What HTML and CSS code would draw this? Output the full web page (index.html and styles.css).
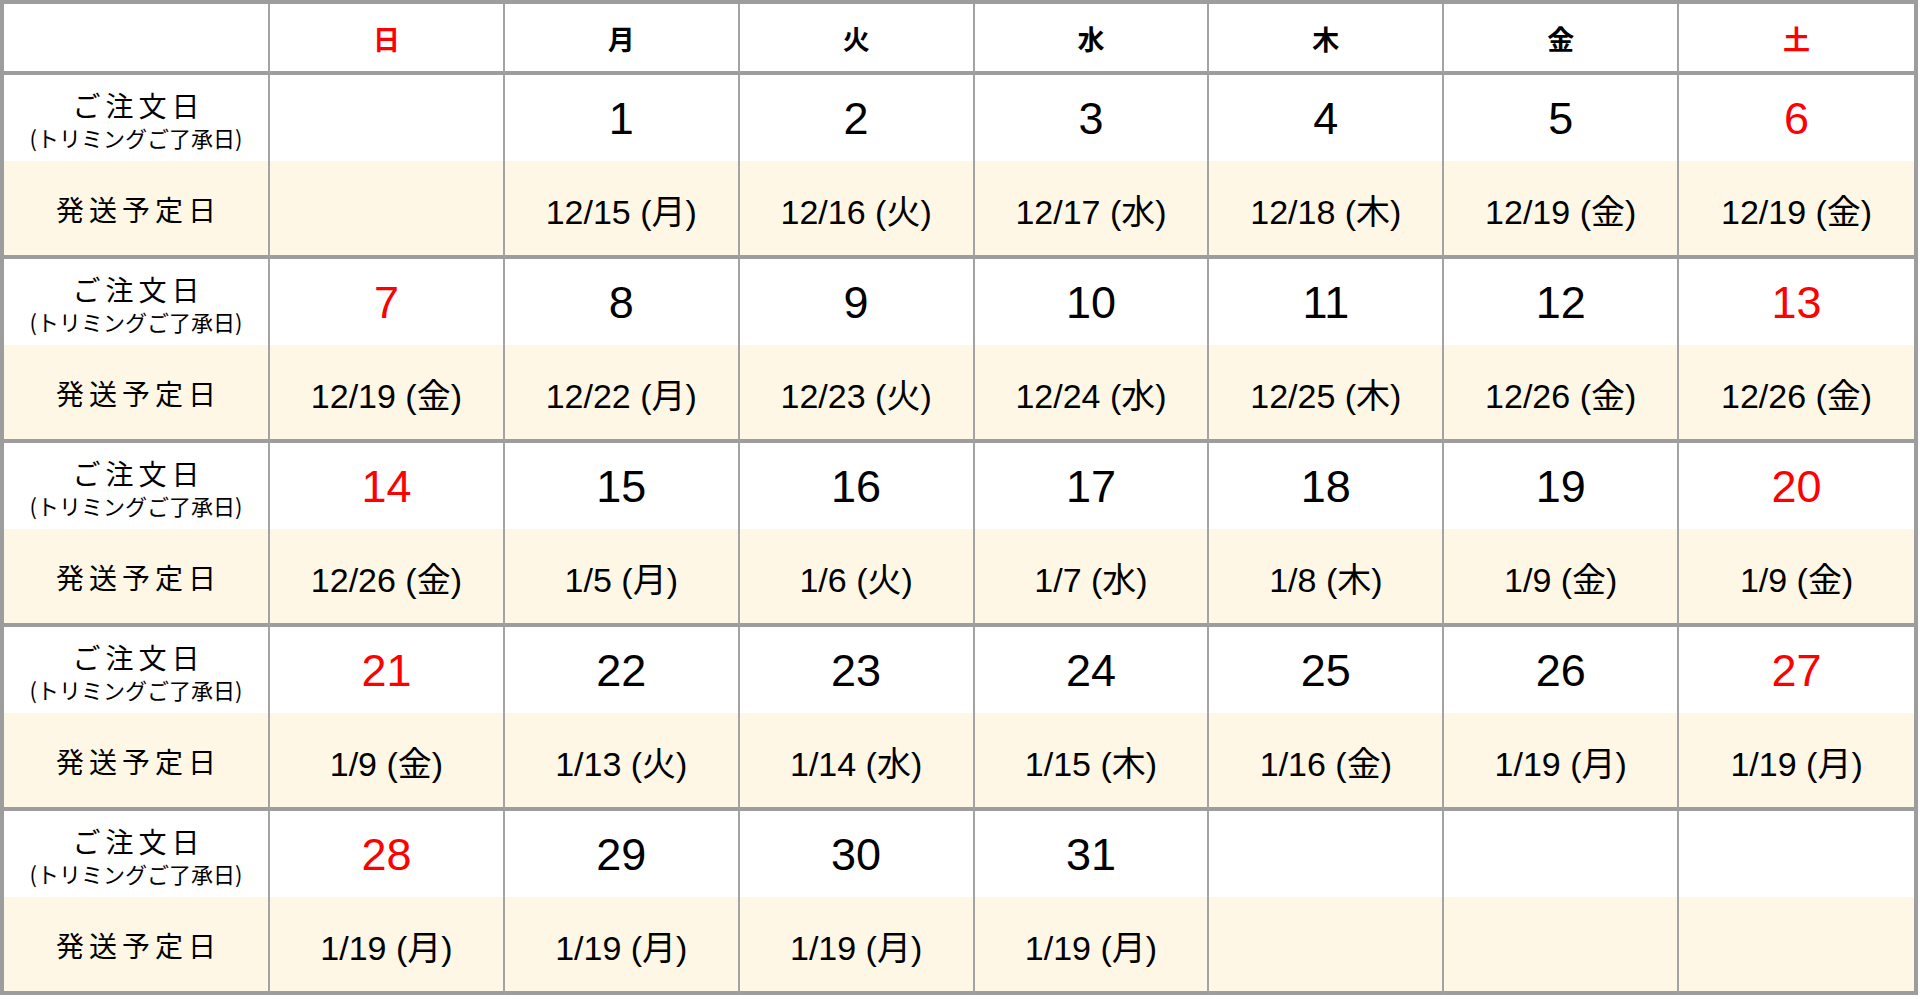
FILE: index.html
```html
<!DOCTYPE html>
<html lang="ja">
<head>
<meta charset="utf-8">
<title>発送予定カレンダー</title>
<link rel="stylesheet" href="styles.css">
</head>
<body>
<div class="cal">
  <div class="cell head"></div>
  <div class="cell head red">日</div>
  <div class="cell head">月</div>
  <div class="cell head">火</div>
  <div class="cell head">水</div>
  <div class="cell head">木</div>
  <div class="cell head">金</div>
  <div class="cell head red last">土</div>

  <div class="cell order label"><span class="l1">ご注文日</span><span class="l2">(トリミングご了承日)</span></div>
  <div class="cell order"></div>
  <div class="cell order num">1</div>
  <div class="cell order num">2</div>
  <div class="cell order num">3</div>
  <div class="cell order num">4</div>
  <div class="cell order num">5</div>
  <div class="cell order num red last">6</div>
  <div class="cell ship label"><span class="l3">発送予定日</span></div>
  <div class="cell ship"></div>
  <div class="cell ship">12/15 (月)</div>
  <div class="cell ship">12/16 (火)</div>
  <div class="cell ship">12/17 (水)</div>
  <div class="cell ship">12/18 (木)</div>
  <div class="cell ship">12/19 (金)</div>
  <div class="cell ship last">12/19 (金)</div>

  <div class="cell order label"><span class="l1">ご注文日</span><span class="l2">(トリミングご了承日)</span></div>
  <div class="cell order num red">7</div>
  <div class="cell order num">8</div>
  <div class="cell order num">9</div>
  <div class="cell order num">10</div>
  <div class="cell order num">11</div>
  <div class="cell order num">12</div>
  <div class="cell order num red last">13</div>
  <div class="cell ship label"><span class="l3">発送予定日</span></div>
  <div class="cell ship">12/19 (金)</div>
  <div class="cell ship">12/22 (月)</div>
  <div class="cell ship">12/23 (火)</div>
  <div class="cell ship">12/24 (水)</div>
  <div class="cell ship">12/25 (木)</div>
  <div class="cell ship">12/26 (金)</div>
  <div class="cell ship last">12/26 (金)</div>

  <div class="cell order label"><span class="l1">ご注文日</span><span class="l2">(トリミングご了承日)</span></div>
  <div class="cell order num red">14</div>
  <div class="cell order num">15</div>
  <div class="cell order num">16</div>
  <div class="cell order num">17</div>
  <div class="cell order num">18</div>
  <div class="cell order num">19</div>
  <div class="cell order num red last">20</div>
  <div class="cell ship label"><span class="l3">発送予定日</span></div>
  <div class="cell ship">12/26 (金)</div>
  <div class="cell ship">1/5 (月)</div>
  <div class="cell ship">1/6 (火)</div>
  <div class="cell ship">1/7 (水)</div>
  <div class="cell ship">1/8 (木)</div>
  <div class="cell ship">1/9 (金)</div>
  <div class="cell ship last">1/9 (金)</div>

  <div class="cell order label"><span class="l1">ご注文日</span><span class="l2">(トリミングご了承日)</span></div>
  <div class="cell order num red">21</div>
  <div class="cell order num">22</div>
  <div class="cell order num">23</div>
  <div class="cell order num">24</div>
  <div class="cell order num">25</div>
  <div class="cell order num">26</div>
  <div class="cell order num red last">27</div>
  <div class="cell ship label"><span class="l3">発送予定日</span></div>
  <div class="cell ship">1/9 (金)</div>
  <div class="cell ship">1/13 (火)</div>
  <div class="cell ship">1/14 (水)</div>
  <div class="cell ship">1/15 (木)</div>
  <div class="cell ship">1/16 (金)</div>
  <div class="cell ship">1/19 (月)</div>
  <div class="cell ship last">1/19 (月)</div>

  <div class="cell order label"><span class="l1">ご注文日</span><span class="l2">(トリミングご了承日)</span></div>
  <div class="cell order num red">28</div>
  <div class="cell order num">29</div>
  <div class="cell order num">30</div>
  <div class="cell order num">31</div>
  <div class="cell order"></div>
  <div class="cell order"></div>
  <div class="cell order last"></div>
  <div class="cell ship label"><span class="l3">発送予定日</span></div>
  <div class="cell ship">1/19 (月)</div>
  <div class="cell ship">1/19 (月)</div>
  <div class="cell ship">1/19 (月)</div>
  <div class="cell ship">1/19 (月)</div>
  <div class="cell ship"></div>
  <div class="cell ship"></div>
  <div class="cell ship last"></div>
</div>
</body>
</html>
```

FILE: styles.css
```css
* { box-sizing: border-box; }
html, body {
  margin: 0;
  padding: 0;
  background: #ffffff;
}
body {
  font-family: "Liberation Sans", "Noto Sans CJK JP", sans-serif;
  color: #000000;
}
.cal {
  width: 1918px;
  display: grid;
  grid-template-columns: 266px repeat(7, 1fr);
  grid-auto-rows: auto;
  border-top: 4px solid #9d9d9d;
  border-left: 4px solid #9d9d9d;
  border-right: 4px solid #9d9d9d;
}
.cell {
  display: flex;
  flex-direction: column;
  align-items: center;
  justify-content: center;
  border-right: 2px solid #a3a3a3;
  text-align: center;
  white-space: nowrap;
}
.cell.last { border-right: none; }
.head {
  height: 71px;
  border-bottom: 4px solid #9d9d9d;
  font-weight: bold;
  font-size: 27px;
  font-family: "Noto Sans CJK JP", sans-serif;
  padding-top: 2px;
}
.order {
  height: 86px;
  background: #ffffff;
}
.ship {
  height: 98px;
  background: #fef7e5;
  border-bottom: 4px solid #9d9d9d;
  font-size: 34px;
  padding-top: 2px;
}
.num {
  font-size: 45px;
  padding-top: 2px;
}
.red { color: #ff0000; }
.label { font-family: "Noto Sans CJK JP", sans-serif; }
.order.label { padding-top: 3px; }
.l1 {
  display: block;
  font-size: 28px;
  letter-spacing: 5px;
  margin-right: -5px;
  line-height: 1.3;
}
.l2 {
  display: block;
  font-size: 22px;
  line-height: 1.3;
}
.l3 {
  font-size: 28px;
  letter-spacing: 5px;
  margin-right: -5px;
}
```
